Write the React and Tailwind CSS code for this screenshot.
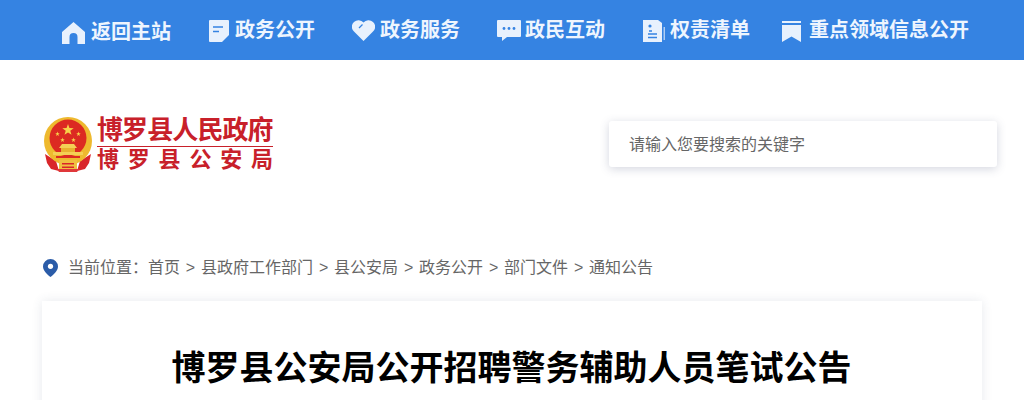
const cjk = { fontFamily: '"Liberation Sans", "Noto Sans CJK SC", sans-serif' };

const HomeIcon = () => (
  <svg width="23" height="22" viewBox="0 0 23 22" className="shrink-0 mt-[4px]">
    <path d="M11.5 0 L23 10 V22 H15.5 V15 A4 4 0 0 0 7.5 15 V22 H0 V10 Z" fill="#e8f1fd" />
  </svg>
);

const DocIcon = () => (
  <svg width="20" height="22" viewBox="0 0 20 22" className="shrink-0 mt-[2px]">
    <path d="M1 0 H19 A1 1 0 0 1 20 1 V15 L13 22 H1 A1 1 0 0 1 0 21 V1 A1 1 0 0 1 1 0 Z" fill="#e8f1fd" />
    <path d="M4 7 H14 M4 11.5 H10" stroke="#3583e2" strokeWidth="1.6" />
  </svg>
);

const HeartIcon = () => (
  <svg width="23" height="21" viewBox="0 0 23 21" className="shrink-0 mt-[1px]">
    <path d="M11.5 21 L2 11.5 A6.3 6.3 0 0 1 2 2 A6.4 6.4 0 0 1 11.5 2.6 A6.4 6.4 0 0 1 21 2 A6.3 6.3 0 0 1 21 11.5 Z" fill="#e8f1fd" />
    <path d="M10.5 4.5 L7 8" stroke="#3583e2" strokeWidth="1.3" />
  </svg>
);

const ChatIcon = () => (
  <svg width="24" height="21" viewBox="0 0 24 21" className="shrink-0 mt-[1px]">
    <path d="M1 0 H23 A1 1 0 0 1 24 1 V16 A1 1 0 0 1 23 17 H10 L5 21 V17 H1 A1 1 0 0 1 0 16 V1 A1 1 0 0 1 1 0 Z" fill="#e8f1fd" />
    <circle cx="7" cy="8.5" r="1.4" fill="#3583e2" />
    <circle cx="12" cy="8.5" r="1.4" fill="#3583e2" />
    <circle cx="17" cy="8.5" r="1.4" fill="#3583e2" />
  </svg>
);

const ListIcon = () => (
  <svg width="22" height="22" viewBox="0 0 22 22" className="shrink-0 mt-[2px]">
    <path d="M0 0 H15 L19 3 V22 H0 Z" fill="#e8f1fd" />
    <circle cx="7" cy="6" r="1.6" fill="#3583e2" />
    <path d="M6 11 H9 M5 14 H14 M5 17.5 H14" stroke="#3583e2" strokeWidth="1.4" />
    <path d="M21.2 7 V20" stroke="#e8f1fd" strokeWidth="1" />
  </svg>
);

const BookmarkIcon = () => (
  <svg width="19" height="21" viewBox="0 0 19 21" className="shrink-0 mt-[2px]">
    <path d="M0 0 H19 V2 H0 Z" fill="#e8f1fd" />
    <path d="M0 4 H19 V21 L9.5 15.5 L0 21 Z" fill="#e8f1fd" />
  </svg>
);

// five pointed star for the emblem
const starPoints = (cx, cy, r) => {
  const pts = [];
  for (let i = 0; i < 10; i++) {
    const rad = i % 2 === 0 ? r : r * 0.4;
    const a = -Math.PI / 2 + (i * Math.PI) / 5;
    pts.push(`${cx + rad * Math.cos(a)},${cy + rad * Math.sin(a)}`);
  }
  return pts.join(" ");
};

const Emblem = () => (
  <svg width="50" height="55" viewBox="0 0 50 55" className="shrink-0">
    {/* ribbons behind */}
    <path d="M2 37 L13 44 L16 54 L8 52 L4 46 Z M48 37 L37 44 L34 54 L42 52 L46 46 Z" fill="#d9262a" />
    <circle cx="25" cy="24" r="24" fill="#eeb92e" />
    <circle cx="25" cy="21" r="18.5" fill="#dc2a22" />
    <polygon points={starPoints(25, 13, 6)} fill="#f7d34a" />
    <polygon points={starPoints(14.5, 17, 2.4)} fill="#f7d34a" />
    <polygon points={starPoints(35.5, 17, 2.4)} fill="#f7d34a" />
    <polygon points={starPoints(19.5, 23, 2.4)} fill="#f7d34a" />
    <polygon points={starPoints(30.5, 23, 2.4)} fill="#f7d34a" />
    {/* gate */}
    <path d="M19 27 H31 L34 31 H16 Z" fill="#f4cf55" />
    <path d="M18 31 H32 V35 H18 Z" fill="#e9b130" />
    <path d="M10 35 H40 V38 H10 Z" fill="#f4cf55" />
    <path d="M13 39 H37 V41 H13 Z" fill="#dc2a22" />
    {/* bottom gear and ribbon */}
    <path d="M16 43 H34 V52 H16 Z" fill="#f0c040" />
    <path d="M19 46 H31 V47.5 H19 Z M19 49.5 H31 V51 H19 Z" fill="#d9262a" />
    <path d="M14 52 H36 L34 55 H16 Z" fill="#e0383a" />
  </svg>
);

const PinIcon = () => (
  <svg width="15" height="18" viewBox="0 0 15 18" className="shrink-0">
    <path d="M7.5 0 A7.5 7.5 0 0 1 15 7.5 C15 12 10 16 7.5 18 C5 16 0 12 0 7.5 A7.5 7.5 0 0 1 7.5 0 Z" fill="#2b5ca8" />
    <circle cx="7.5" cy="7.3" r="2.6" fill="#fff" />
  </svg>
);

const navItems = [
  { label: "返回主站", icon: <HomeIcon />, cls: "gap-[6px] ml-[62px] mt-[2px]", text: "mt-[2px]" },
  { label: "政务公开", icon: <DocIcon />, cls: "gap-[6px] ml-[38px]", text: "" },
  { label: "政务服务", icon: <HeartIcon />, cls: "gap-[5px] ml-[37px]", text: "" },
  { label: "政民互动", icon: <ChatIcon />, cls: "gap-[4px] ml-[37px]", text: "" },
  { label: "权责清单", icon: <ListIcon />, cls: "gap-[5px] ml-[38px]", text: "" },
  { label: "重点领域信息公开", icon: <BookmarkIcon />, cls: "gap-[8px] ml-[32px]", text: "" },
];

const crumbs = ["首页", "县政府工作部门", "县公安局", "政务公开", "部门文件", "通知公告"];

export default function App() {
  return (
    <div className="w-[1024px] h-[400px] overflow-hidden bg-white" style={cjk}>
      {/* Top nav */}
      <nav className="flex items-center h-[60px] bg-[#3583e2]">
        {navItems.map((item) => (
          <a key={item.label} className={`flex items-center ${item.cls}`}>
            {item.icon}
            <span className={`text-[20px] leading-[28px] font-bold text-[#eef5fe] whitespace-nowrap ${item.text}`}>
              {item.label}
            </span>
          </a>
        ))}
      </nav>

      {/* Logo and search */}
      <div className="flex items-start justify-between pl-[43px] pr-[27px] pt-[56px] h-[180px]">
        <div className="flex items-center gap-[4px]">
          <Emblem />
          <div className="flex flex-col w-[176px] text-[#c8202a]">
            <span className="text-[26px] leading-[28px] font-bold whitespace-nowrap tracking-[-0.9px]">博罗县人民政府</span>
            <span className="h-px bg-[#c8202a] mt-[2px]"></span>
            <span className="flex justify-between text-[22px] leading-[26px] font-bold">
              <span>博</span><span>罗</span><span>县</span><span>公</span><span>安</span><span>局</span>
            </span>
          </div>
        </div>
        <div className="flex items-center w-[388px] h-[46px] mt-[5px] pl-[20px] pt-[2px] bg-white rounded-[3px] shadow-[0_2px_10px_rgba(60,70,110,0.22)]">
          <span className="text-[16px] text-[#666]">请输入您要搜索的关键字</span>
        </div>
      </div>

      {/* Breadcrumb */}
      <div className="flex items-center h-[24px] pl-[43px] mt-[16px] text-[16px] text-[#666]">
        <PinIcon />
        <span className="ml-[10px]">当前位置：</span>
        <span>{crumbs[0]}</span>
        {crumbs.slice(1).map((c) => (
          <span key={c} className="flex whitespace-nowrap">
            <span className="w-[21px] text-center">&gt;</span>
            {c}
          </span>
        ))}
      </div>

      {/* Article card */}
      <div className="mt-[21px] mx-[42px] h-[200px] pt-[46px] pr-[1px] bg-white shadow-[0_0_10px_rgba(60,70,110,0.12)]">
        <h1 className="text-[34px] leading-[42px] font-bold text-black text-center">
          博罗县公安局公开招聘警务辅助人员笔试公告
        </h1>
      </div>
    </div>
  );
}
